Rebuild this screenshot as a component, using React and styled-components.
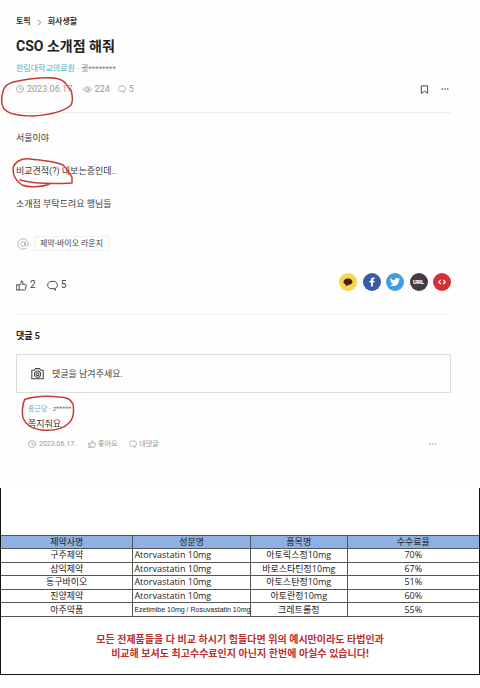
import React, { useState } from 'react';
import styled, { createGlobalStyle } from 'styled-components';

const GlobalStyle = createGlobalStyle`
  * {
    box-sizing: border-box;
  }
  body {
    margin: 0;
    background: #fefefe;
    color: #333;
    font-family: Roboto, 'Noto Sans CJK KR', sans-serif;
    font-size: 9px;
    line-height: 12px;
  }
  a {
    color: inherit;
    text-decoration: none;
  }
  button {
    padding: 0;
    border: none;
    background: none;
    color: inherit;
    font: inherit;
    cursor: pointer;
  }
`;

const Post = styled.main`
  padding: 16px 29px 0 16px;
`;
const Breadcrumb = styled.nav`
  display: flex;
  align-items: center;
  gap: 5px;
  color: #333;
  font-size: 8px;
  font-weight: 700;
`;
const Header = styled.header`
  padding-bottom: 17px;
  border-bottom: 1px solid #eee;
`;
const Title = styled.h1`
  margin: 8px 0 7px;
  color: #222;
  font-size: 14px;
  font-weight: 700;
  line-height: 20px;
`;
const Author = styled.div`
  color: #777;
  font-size: ${(props) => (props.$small ? '7px' : '8px')};
  line-height: ${(props) => (props.$small ? '10px' : '12px')};
  a {
    color: ${(props) => (props.$small ? '#6fabc4' : '#4fb0bd')};
  }
`;
const Row = styled.div`
  display: flex;
  align-items: center;
  justify-content: space-between;
`;
const MetaRow = styled(Row)`
  margin-top: 8px;
  color: #999;
`;
const Stats = styled.div`
  display: flex;
  align-items: center;
  gap: ${(props) => props.$gap || '12px'};
`;
const Stat = styled.span`
  position: relative;
  display: flex;
  align-items: center;
  gap: 3px;
`;
const Tools = styled.div`
  display: flex;
  align-items: center;
  gap: 12px;
  padding-right: 2px;
  color: #444;
`;
const IconButton = styled.button`
  display: flex;
  align-items: center;
  gap: ${(props) => props.$gap || '0'};
`;
const Body = styled.div`
  padding: 19px 0 23px;
  border-bottom: 1px solid #f2f2f2;
`;
const Paragraph = styled.p`
  position: relative;
  margin: 0 0 21px;
  color: #3a3a3a;
`;
const TagRow = styled.div`
  display: flex;
  align-items: center;
  gap: 5px;
  margin-top: 26px;
  padding-left: 1px;
  color: #aaa;
`;
const Tag = styled.a`
  padding: 0 5px;
  border: 1px solid #f0f0f0;
  color: #444;
  font-size: 8px;
  line-height: 13px;
`;
const Actions = styled(Row)`
  align-items: flex-end;
  margin-top: 22px;
`;
const Reactions = styled.div`
  display: flex;
  gap: 11px;
  color: #444;
  font-size: 10px;
`;
const Shares = styled.div`
  display: flex;
  justify-content: space-between;
  width: 112px;
`;
const Share = styled.button`
  display: flex;
  align-items: center;
  justify-content: center;
  width: 18px;
  height: 18px;
  border-radius: 50%;
  background: ${(props) => props.$color};
  color: #fff;
  font-size: 6px;
  font-weight: 900;
`;
const CommentTitle = styled.h2`
  margin: 15px 0 12px;
  color: #222;
  font-size: 9px;
  font-weight: 700;
  line-height: 12px;
`;
const CommentForm = styled.form`
  display: flex;
  align-items: center;
  gap: 8px;
  padding: 11px 14px;
  border: 1px solid #ddd;
  color: #444;
  input {
    flex: 1;
    min-width: 0;
    height: 15px;
    padding: 0;
    border: none;
    outline: none;
    background: none;
    color: #333;
    font: inherit;
  }
  input::placeholder {
    color: #444;
    opacity: 1;
  }
`;
const Comment = styled.article`
  position: relative;
  padding: 11px 14px 39px 12px;
`;
const CommentText = styled.p`
  margin: 4px 0 9px;
  color: #333;
`;
const CommentMeta = styled(Row)`
  color: #999;
  font-size: 7px;
  line-height: 10px;
`;
const Mark = styled.svg`
  position: absolute;
  left: ${(props) => props.$left};
  top: ${(props) => props.$top};
  fill: none;
  stroke: #c63c39;
  stroke-width: 1.5;
  stroke-linecap: round;
  stroke-linejoin: round;
  pointer-events: none;
`;

const Sheet = styled.section`
  margin-bottom: 12px;
  padding: 47px 0 14px;
  border: solid #111;
  border-width: 0 1px 1px;
  background: #fff;
  font-family: 'Open Sans', 'Noto Sans CJK KR', sans-serif;
`;
const FeeTable = styled.table`
  width: 100%;
  height: 82px;
  border-collapse: collapse;
  table-layout: fixed;
  color: #222;
  th,
  td {
    padding: 0 1px;
    border: 1px solid #555;
    font-size: 9px;
    font-weight: 400;
    line-height: 12px;
    text-align: center;
    white-space: nowrap;
  }
  th {
    background: #8eb0e2;
  }
  th:first-child,
  td:first-child {
    border-left: none;
  }
  th:last-child,
  td:last-child {
    border-right: none;
  }
`;
const Column = styled.col`
  width: ${(props) => props.$width};
`;
const Ingredient = styled.td`
  && {
    font-family: ${(props) => (props.$small ? "'Liberation Sans', sans-serif" : 'inherit')};
    font-size: ${(props) => (props.$small ? '7px' : '9px')};
    text-align: left;
  }
`;
const Notice = styled.p`
  margin: 15px 0 0;
  color: #b92f2f;
  font-size: 10px;
  font-weight: 700;
  line-height: 14px;
  text-align: center;
`;

const Icon = ({ size = 8, box = 16, stroke = 1.4, children }) => (
  <svg
    width={size}
    height={size}
    viewBox={`0 0 ${box} ${box}`}
    fill='none'
    stroke='currentColor'
    strokeWidth={stroke}
    strokeLinecap='round'
    strokeLinejoin='round'
    aria-hidden='true'
  >
    {children}
  </svg>
);
const ClockIcon = () => (
  <Icon>
    <circle cx='8' cy='8' r='7' />
    <path d='M8 4v4.5h3.5' />
  </Icon>
);
const EyeIcon = () => (
  <Icon size={9}>
    <path d='M1 8c3-6.300 11-6.300 14 0-3 6.300-11 6.300-14 0z' />
    <circle cx='8' cy='8' r='2.600' />
  </Icon>
);
const BubbleIcon = ({ size, stroke }) => (
  <Icon size={size} stroke={stroke}>
    <path d='M10 12.500H6C2.800 12.500 1 10.500 1 7.500S2.800 2 6 2h4c3.200 0 5 2.500 5 5.500 0 2.200-1 3.900-2.800 4.600v2.900L10 12.500z' />
  </Icon>
);
const ThumbIcon = ({ size, stroke }) => (
  <Icon size={size} stroke={stroke}>
    <path d='M1 7h3.500v7.500H1zM4.500 7.500L7.500 5V1.500c2-.3 2.800.8 2.500 2.500l-.4 2.300h4.100c1 0 1.500.8 1.300 1.700l-1.300 5.200c-.2.800-.8 1.300-1.600 1.300H4.500' />
  </Icon>
);
const DotsIcon = () => (
  <svg width='8' height='4' viewBox='0 0 8 4' fill='currentColor' aria-hidden='true'>
    <circle cx='1.200' cy='2' r='.8' />
    <circle cx='4' cy='2' r='.8' />
    <circle cx='6.800' cy='2' r='.8' />
  </svg>
);
const BookmarkIcon = () => (
  <Icon size={9} stroke={1.7}>
    <path d='M3 1.500h10.500v13L8.250 11 3 14.500z' />
  </Icon>
);
const CameraIcon = () => (
  <Icon size={13} stroke={1.3}>
    <path d='M1 4h3l1.500-2h5L12 4h3v10.500H1z' />
    <circle cx='8' cy='8.800' r='3.800' />
    <circle cx='8' cy='8.800' r='1.800' />
  </Icon>
);
const AtIcon = () => (
  <Icon size={12} box={24} stroke={1.6}>
    <circle cx='12' cy='12' r='4.500' />
    <path d='M16.500 7.500v6c0 4 6 3.500 6-1.500a10.500 10.500 0 1 0-4.500 8.600' />
  </Icon>
);

const rows = [
  ['구주제약', 'Atorvastatin 10mg', '아토릭스정10mg', '70%'],
  ['삼익제약', 'Atorvastatin 10mg', '바로스타틴정10mg', '67%'],
  ['동구바이오', 'Atorvastatin 10mg', '아토스탄정10mg', '51%'],
  ['진양제약', 'Atorvastatin 10mg', '아토란정10mg', '60%'],
  ['아주약품', 'Ezetimibe 10mg / Rosuvastatin 10mg', '크레트롤정', '55%']
];

const PostHeader = () => (
  <Header>
    <Breadcrumb>
      <a href='#topics'>토픽</a>
      <Icon size={7}>
        <path d='M5 2l6 6-6 6' />
      </Icon>
      <a href='#company'>회사생활</a>
    </Breadcrumb>
    <Title>CSO 소개점 해줘</Title>
    <Author>
      <a href='#hallym'>한림대학교의료원</a> · 귓********
    </Author>
    <MetaRow>
      <Stats $gap='8px'>
        <Stat>
          <ClockIcon />
          2023.06.17.
          <Mark $left='-16px' $top='-6px' width='74' height='42' viewBox='0 0 74 42'>
            <path d='M19 4C10 5 4 8 3 15c-2 6-2 12 1 17 6 6 18 7 29 7 14-1 30-3 38-11 3-5 1-10 0-15-4-2-3-6-8-9C56-1 35 0 14 5' />
          </Mark>
        </Stat>
        <Stat>
          <EyeIcon />
          224
        </Stat>
        <Stat>
          <BubbleIcon />5
        </Stat>
      </Stats>
      <Tools>
        <IconButton aria-label='북마크'>
          <BookmarkIcon />
        </IconButton>
        <IconButton aria-label='더보기'>
          <DotsIcon />
        </IconButton>
      </Tools>
    </MetaRow>
  </Header>
);

const ShareButtons = () => (
  <Shares>
    <Share $color='#f6d64c' aria-label='카카오톡'>
      <svg width='10' height='10' viewBox='0 0 20 20' fill='#43200f'>
        <path d='M10 3c5 0 9 2.800 9 6.500S15 16 10 16l-4.500 3 .7-3.600C3 14.500 1 12.300 1 9.500 1 5.800 5 3 10 3z' />
      </svg>
    </Share>
    <Share $color='#3b5ba6' aria-label='페이스북'>
      <svg width='10' height='10' viewBox='0 0 20 20' fill='#fff'>
        <path d='M8 19v-8H5V7.500h3V5.300C8 2.500 9.700 1 12.300 1H15v3.300h-1.800c-1.200 0-1.500.6-1.500 1.500v1.700H15l-.5 3.500h-2.800v8z' />
      </svg>
    </Share>
    <Share $color='#3f9fdf' aria-label='트위터'>
      <svg width='10' height='10' viewBox='0 0 24 24' fill='#fff'>
        <path d='M23.950 4.570a10 10 0 0 1-2.820.770 4.960 4.960 0 0 0 2.160-2.720 9.900 9.900 0 0 1-3.120 1.190 4.920 4.920 0 0 0-8.380 4.480A13.930 13.930 0 0 1 1.640 3.160a4.920 4.920 0 0 0 1.520 6.570 4.900 4.900 0 0 1-2.230-.610v.060a4.920 4.920 0 0 0 3.950 4.830 5 5 0 0 1-2.210.080 4.940 4.940 0 0 0 4.600 3.420A9.870 9.870 0 0 1 0 19.540a14 14 0 0 0 7.550 2.210c9.050 0 14-7.500 14-13.980l-.020-.640a9.900 9.900 0 0 0 2.420-2.560z' />
      </svg>
    </Share>
    <Share $color='#3c3d49'>URL</Share>
    <Share $color='#d62f36' aria-label='소스 코드'>
      <Icon size={8} stroke={2.2}>
        <path d='M5 4.500L1.500 8 5 11.500M11 4.500L14.500 8 11 11.500' />
      </Icon>
    </Share>
  </Shares>
);

const PostBody = () => (
  <Body>
    <Paragraph>서울이야</Paragraph>
    <Paragraph>
      비교견적(?) 내보는중인데..
      <Mark $left='-5px' $top='-8px' width='62' height='32' viewBox='0 0 62 32'>
        <path d='M39 27c-8 3-21 4-28 1C5 24 2 18 2 12 3 5 10 1 19 2c10 1 26 2 33 6 4 4 6 8 9 12v6c-17 1-37 1-52-3' />
      </Mark>
    </Paragraph>
    <Paragraph>소개점 부탁드려요 행님들</Paragraph>
    <TagRow>
      <AtIcon />
      <Tag href='#lounge'>제약-바이오 라운지</Tag>
    </TagRow>
    <Actions>
      <Reactions>
        <IconButton $gap='3px' aria-label='좋아요'>
          <ThumbIcon size={11} stroke={1.4} />2
        </IconButton>
        <IconButton $gap='3px' aria-label='댓글'>
          <BubbleIcon size={11} stroke={1.4} />5
        </IconButton>
      </Reactions>
      <ShareButtons />
    </Actions>
  </Body>
);

const Comments = () => {
  const [text, setText] = useState('');

  return (
    <section>
      <CommentTitle>댓글 5</CommentTitle>
      <CommentForm onSubmit={(e) => e.preventDefault()}>
        <IconButton type='button' aria-label='사진 첨부'>
          <CameraIcon />
        </IconButton>
        <input
          aria-label='댓글'
          placeholder='댓글을 남겨주세요.'
          value={text}
          onChange={(e) => setText(e.target.value)}
        />
      </CommentForm>
      <Comment>
        <Author $small>
          <a href='#ckd'>종근당</a> · z*****
        </Author>
        <CommentText>쪽지줘요</CommentText>
        <Mark $left='5px' $top='2px' width='54' height='37' viewBox='0 0 54 37'>
          <path d='M4 4C1 9 1 18 2 23c3 7 9 11 18 12 10 1 21 0 28-7 5-5 5-13 4-19-2-5-7-7-14-7C28 1 15 1 5 4l5-1' />
        </Mark>
        <CommentMeta>
          <Stats>
            <Stat>
              <ClockIcon />
              2023.06.17.
            </Stat>
            <IconButton $gap='2px'>
              <ThumbIcon />
              좋아요
            </IconButton>
            <IconButton $gap='2px'>
              <BubbleIcon />
              대댓글
            </IconButton>
          </Stats>
          <IconButton aria-label='더보기'>
            <DotsIcon />
          </IconButton>
        </CommentMeta>
      </Comment>
    </section>
  );
};

const FeeSheet = () => (
  <Sheet>
    <FeeTable>
      <colgroup>
        <Column $width='27.600%' />
        <Column $width='24.600%' />
        <Column $width='20.200%' />
        <Column $width='27.600%' />
      </colgroup>
      <thead>
        <tr>
          <th>제약사명</th>
          <th>성분명</th>
          <th>품목명</th>
          <th>수수료율</th>
        </tr>
      </thead>
      <tbody>
        {rows.map(([company, ingredient, product, fee]) => (
          <tr key={company}>
            <td>{company}</td>
            <Ingredient $small={ingredient.length > 20}>{ingredient}</Ingredient>
            <td>{product}</td>
            <td>{fee}</td>
          </tr>
        ))}
      </tbody>
    </FeeTable>
    <Notice>
      모든 전제품들을 다 비교 하시기 힘들다면 위의 예시만이라도 타법인과
      <br />
      비교해 보셔도 최고수수료인지 아닌지 한번에 아실수 있습니다!
    </Notice>
  </Sheet>
);

const App = () => (
  <>
    <GlobalStyle />
    <Post>
      <PostHeader />
      <PostBody />
      <Comments />
    </Post>
    <FeeSheet />
  </>
);

export default App;
